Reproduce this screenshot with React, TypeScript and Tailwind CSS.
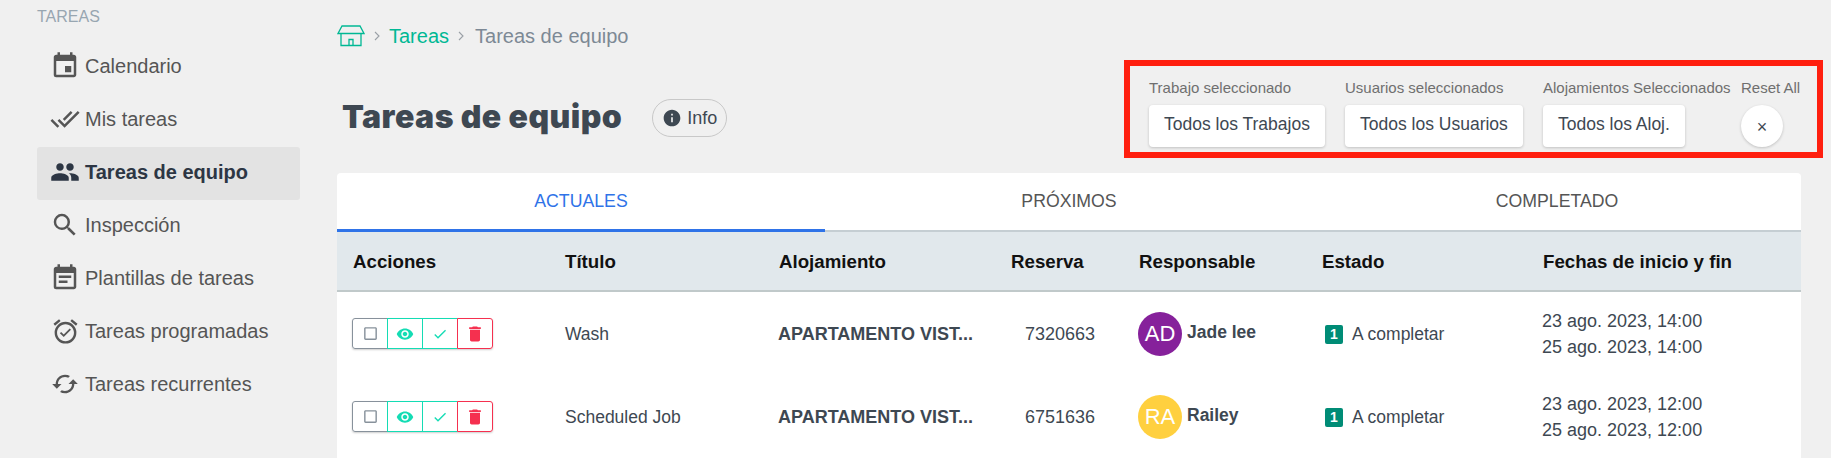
import type { ReactNode } from "react";
import {
  MdEvent,
  MdDoneAll,
  MdPeople,
  MdSearch,
  MdEventNote,
  MdOutlineAlarmOn,
  MdSync,
  MdCheckBoxOutlineBlank,
  MdCheck,
  MdDelete,
  MdRemoveRedEye,
  MdInfo,
} from "react-icons/md";

const columns =
  "grid grid-cols-[212px_214px_232px_128px_183px_221px_274px] items-center";

const menu = [
  { label: "Calendario", icon: <MdEvent size={30} /> },
  { label: "Mis tareas", icon: <MdDoneAll size={30} /> },
  { label: "Tareas de equipo", icon: <MdPeople size={30} />, active: true },
  { label: "Inspección", icon: <MdSearch size={30} /> },
  { label: "Plantillas de tareas", icon: <MdEventNote size={30} /> },
  { label: "Tareas programadas", icon: <MdOutlineAlarmOn size={29} /> },
  { label: "Tareas recurrentes", icon: <MdSync size={28} className="rotate-90" /> },
];

const filters = [
  { label: "Trabajo seleccionado", value: "Todos los Trabajos", col: "w-[196px]" },
  { label: "Usuarios seleccionados", value: "Todos los Usuarios", col: "w-[198px]" },
  { label: "Alojamientos Seleccionados", value: "Todos los Aloj.", col: "w-[198px]" },
];

const rows = [
  {
    title: "Wash",
    booking: "7320663",
    initials: "AD",
    name: "Jade lee",
    color: "bg-[#86219b]",
    start: "23 ago. 2023, 14:00",
    end: "25 ago. 2023, 14:00",
  },
  {
    title: "Scheduled Job",
    booking: "6751636",
    initials: "RA",
    name: "Railey",
    color: "bg-[#ffd03f]",
    start: "23 ago. 2023, 12:00",
    end: "25 ago. 2023, 12:00",
  },
];

const HomeIcon = () => (
  <svg width="28" height="22" viewBox="0 0 28 22" fill="none" stroke="#00b894" strokeWidth="1.3">
    <path d="M5 1h18l4 7.5H1L5 1Z" />
    <path d="M4 8.5V20.5H24V8.5" />
    <path d="M12 20.5V14.5H16V20.5" />
  </svg>
);

const Chevron = () => (
  <svg width="6" height="10" viewBox="0 0 6 10" fill="none" stroke="#9aa0a6" strokeWidth="1.1">
    <path d="M1 1l4 4-4 4" />
  </svg>
);

const ActionButton = ({ className, children }: { className: string; children: ReactNode }) => (
  <span className={`flex h-[31px] w-[36px] -ml-px items-center justify-center border bg-white first:ml-0 first:rounded-l-[3px] last:rounded-r-[3px] ${className}`}>
    {children}
  </span>
);

export default function App() {
  return (
    <div className="flex h-[458px] w-[1831px] overflow-hidden bg-[#f0f0f0] font-['Liberation_Sans',sans-serif] text-[#3e4852]">
      <aside className="w-[337px] shrink-0 pl-[37px]">
        <div className="flex h-[41px] items-start pt-[7px] text-[16px] leading-5 text-[#98a6b1]">
          TAREAS
        </div>
        <nav className="flex w-[263px] flex-col">
          {menu.map((item) => (
            <div
              key={item.label}
              className={`flex h-[53px] items-center rounded-[3px] pb-[3px] text-[20px] ${
                item.active ? "bg-[#e3e3e3] font-bold text-[#2d3644]" : "text-[#555555]"
              }`}
            >
              <span className="flex w-[48px] justify-end pr-[4px]">
                <span className="flex w-[32px] justify-center">{item.icon}</span>
              </span>
              <span>{item.label}</span>
            </div>
          ))}
        </nav>
      </aside>

      <main className="flex w-[1464px] shrink-0 flex-col">
        <div className="flex h-[60px] items-start pt-[25px]">
          <div className="flex items-center gap-[9px] text-[20px] leading-[22px]">
            <HomeIcon />
            <Chevron />
            <span className="text-[#00b894]">Tareas</span>
            <Chevron />
            <span className="ml-[2px] text-[#7d8995]">Tareas de equipo</span>
          </div>
        </div>

        <div className="flex h-[98px] items-start justify-between">
          <div className="flex items-center pt-[39px]">
            <h1 className="-mt-[3px] ml-[5px] font-['Inter',sans-serif] text-[32px] leading-[38px] font-black tracking-[0.45px] text-[#3e4852]">
              Tareas de equipo
            </h1>
            <span className="ml-[30px] flex h-[38px] w-[75px] items-center justify-center gap-[5px] rounded-full border border-[#c8c8c8] text-[18px]">
              <MdInfo size={20} />
              Info
            </span>
          </div>

          <div className="-mr-[22px] flex h-[98px] w-[699px] border-[6px] border-[#ff1f0f] pl-[19px] pt-[12px]">
            {filters.map((f) => (
              <div key={f.label} className={f.col}>
                <div className="h-[20px] text-[15px] leading-5 whitespace-nowrap text-[#6f6f6f]">{f.label}</div>
                <span className="mt-[7px] inline-flex h-[42px] items-center rounded-[4px] bg-white px-[15px] pb-1 text-[17.5px] whitespace-nowrap text-[#3e4852] shadow-[0_1px_3px_rgba(0,0,0,0.2)]">
                  {f.value}
                </span>
              </div>
            ))}
            <div>
              <div className="h-[20px] text-[15px] leading-5 whitespace-nowrap text-[#6f6f6f]">Reset All</div>
              <span className="mt-[7px] flex h-[42px] w-[42px] items-center justify-center rounded-full bg-white pt-[3px] text-[18px] text-[#3e4852] shadow-[0_1px_3px_rgba(0,0,0,0.2)]">
                ×
              </span>
            </div>
          </div>
        </div>

        <section className="mt-[15px] flex-1 rounded-t-[4px] bg-white">
          <div className="grid h-[59px] grid-cols-3 border-b-2 border-[#c5ced3] text-[17.7px] text-[#555555]">
            <div className="-mb-[2px] flex items-center justify-center border-b-[3px] border-[#2f73e8] text-[#2f73e8]">
              ACTUALES
            </div>
            <div className="flex items-center justify-center">PRÓXIMOS</div>
            <div className="flex items-center justify-center">COMPLETADO</div>
          </div>

          <div className={`${columns} h-[60px] border-b-2 border-[#c0c9ca] bg-[#e1e8ec] pt-[2px] text-[18.7px] font-bold text-[#111111]`}>
            {["Acciones", "Título", "Alojamiento", "Reserva", "Responsable", "Estado", "Fechas de inicio y fin"].map((h) => (
              <div key={h} className="pl-4">
                {h}
              </div>
            ))}
          </div>

          {rows.map((r) => (
            <div key={r.booking} className={`${columns} h-[83px] text-[17.5px]`}>
              <div className="pl-[15px]">
                <div className="flex w-fit rounded-[3px] shadow-[0_1px_2px_rgba(0,0,0,0.2)]">
                  <ActionButton className="border-[#87919b] text-[#87919b]">
                    <MdCheckBoxOutlineBlank size={17} />
                  </ActionButton>
                  <ActionButton className="border-[#14dcb4] text-[#14dcb4]">
                    <MdRemoveRedEye size={18} />
                  </ActionButton>
                  <ActionButton className="border-[#14dcb4] text-[#14dcb4]">
                    <MdCheck size={16} />
                  </ActionButton>
                  <ActionButton className="border-[#f5304f] text-[#f5304f]">
                    <MdDelete size={20} />
                  </ActionButton>
                </div>
              </div>
              <div className="pl-4 pt-px">{r.title}</div>
              <div className="truncate pl-[15px] pt-px text-[18px] font-bold">APARTAMENTO VIST...</div>
              <div className="pl-[30px] pt-px text-[18px]">{r.booking}</div>
              <div className="flex items-center gap-[5px] pl-[15px]">
                <span className={`flex h-[44px] w-[44px] items-center justify-center rounded-full text-[22px] text-white ${r.color}`}>
                  {r.initials}
                </span>
                <span className="-mt-[2px] font-bold">{r.name}</span>
              </div>
              <div className="flex items-center pl-[19px] pt-px">
                <span className="flex h-[19px] w-[18px] items-center justify-center rounded-[2px] bg-[#008c76] text-[14px] font-bold text-white">
                  1
                </span>
                <span className="ml-[9px]">A completar</span>
              </div>
              <div className="pl-[15px] text-[18px] leading-[26px]">
                <div>{r.start}</div>
                <div>{r.end}</div>
              </div>
            </div>
          ))}
        </section>
      </main>
    </div>
  );
}
